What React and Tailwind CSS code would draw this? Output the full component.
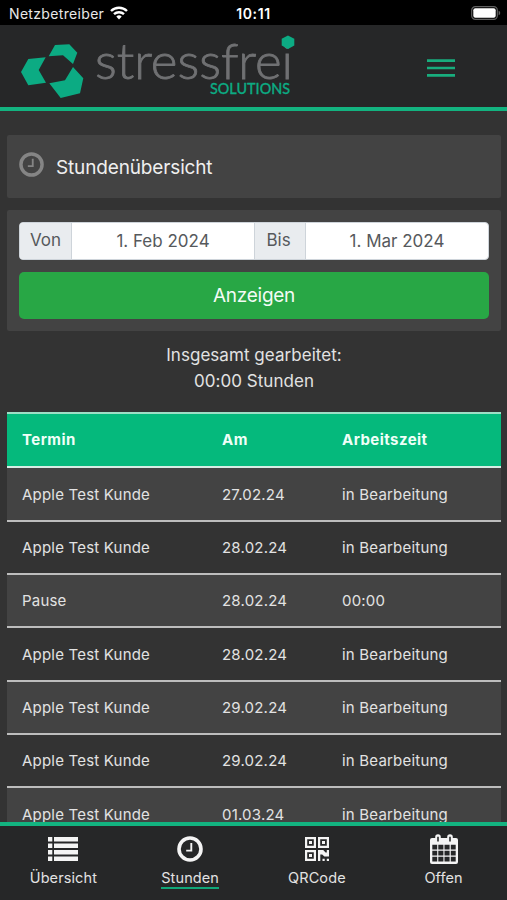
const rows = [
  { termin: "Apple Test Kunde", am: "27.02.24", zeit: "in Bearbeitung" },
  { termin: "Apple Test Kunde", am: "28.02.24", zeit: "in Bearbeitung" },
  { termin: "Pause", am: "28.02.24", zeit: "00:00" },
  { termin: "Apple Test Kunde", am: "28.02.24", zeit: "in Bearbeitung" },
  { termin: "Apple Test Kunde", am: "29.02.24", zeit: "in Bearbeitung" },
  { termin: "Apple Test Kunde", am: "29.02.24", zeit: "in Bearbeitung" },
  { termin: "Apple Test Kunde", am: "01.03.24", zeit: "in Bearbeitung" },
];

function ClockIcon({ className }) {
  return (
    <svg viewBox="0 0 26 26" fill="none" stroke="currentColor" className={className}>
      <circle cx="13" cy="13" r="11" strokeWidth="3.6" />
      <path d="M14.3 7v7.6H9.2" strokeWidth="1.9" />
    </svg>
  );
}

function ListIcon() {
  return (
    <svg viewBox="0 0 30 24" fill="currentColor" className="w-[30px] h-6">
      <path d="M0 0h4.3v4.6H0zM6 0h24v4.6H6zM0 6.5h4.3v4.6H0zM6 6.5h24v4.6H6zM0 12.9h4.3v4.6H0zM6 12.9h24v4.6H6zM0 19.4h4.3V24H0zM6 19.4h24V24H6z" />
    </svg>
  );
}

function QrIcon() {
  return (
    <svg viewBox="0 0 24 24" fill="currentColor" fillRule="evenodd" className="w-6 h-6">
      <path d="M0 0h11v11H0zM2.2 2.2v6.6h6.6V2.2zM4 4h3v3H4z" />
      <path d="M13 0h11v11H13zM15.2 2.2v6.6h6.6V2.2zM17 4h3v3h-3z" />
      <path d="M0 13h11v11H0zM2.2 15.2v6.6h6.6v-6.6zM4 17h3v3H4z" />
      <path d="M13 13h5.2l2.4 2.4h1.2V13H24v6.6h-4.6l-2.2-2.2h-1.9V24H13zM17.5 21.7h2.2V24h-2.2zM21.8 21.7H24V24h-2.2z" />
    </svg>
  );
}

function CalendarIcon() {
  return (
    <svg viewBox="0 0 28 30" fill="currentColor" fillRule="evenodd" className="w-7 h-[30px]">
      <path d="M2 4h3.2V3a2.8 2.8 0 0 1 5.6 0v1h6.4V3a2.8 2.8 0 0 1 5.6 0v1H26a2 2 0 0 1 2 2v22a2 2 0 0 1-2 2H2a2 2 0 0 1-2-2V6a2 2 0 0 1 2-2zM7.2 2.8v4.8h1.6V2.8zM19.2 2.8v4.8h1.6V2.8zM2.3 10.8v4.8h4.9v-4.8zM8.3 10.8v4.8h5.1v-4.8zM14.5 10.8v4.8h5.1v-4.8zM20.8 10.8v4.8h4.9v-4.8zM2.3 16.8v4.8h4.9v-4.8zM8.3 16.8v4.8h5.1v-4.8zM14.5 16.8v4.8h5.1v-4.8zM20.8 16.8v4.8h4.9v-4.8zM2.3 22.8v4.7h4.9v-4.7zM8.3 22.8v4.7h5.1v-4.7zM14.5 22.8v4.7h5.1v-4.7zM20.8 22.8v4.7h4.9v-4.7z" />
    </svg>
  );
}

function Logo() {
  return (
    <svg viewBox="0 0 275 66" className="w-[275px] h-[66px] overflow-visible">
      <g fill="#0cab83">
        <path d="M27.7 23.3 34 12l14.3-.7 8 8.4L52 31l-10-8.8z" />
        <path d="m0 39 7.3-13 17.4-1.7-7 12.7L25 49.7 7.3 52.3z" />
        <path d="m28.3 50.3 15.7-3L52 34l10.3 11.3-3.3 15L39.7 65z" />
      </g>
      <text x="74" y="46" textLength="198" lengthAdjust="spacingAndGlyphs" strokeWidth="0.8" className="fill-[#707173] stroke-[#707173] font-['Lato',sans-serif] font-light text-[49px]">stressfrei</text>
      <path d="m267 2.4 6.3 3.4v6.8l-6.3 3.5-6.3-3.5V5.8z" fill="#0cab83" />
      <text x="189" y="61" textLength="80" lengthAdjust="spacingAndGlyphs" strokeWidth="0.3" className="fill-[#0cab83] stroke-[#0cab83] font-['Lato',sans-serif] font-medium text-[14.5px]">SOLUTIONS</text>
    </svg>
  );
}

function StatusBar() {
  return (
    <div className="grid grid-cols-3 items-center h-[25px] shrink-0 bg-black text-white px-[9px] pt-[3px]">
      <div className="flex items-center gap-[6px]">
        <span className="text-[14px] tracking-[0.33px] leading-5 text-[#e8e8e8] -mt-px">Netzbetreiber</span>
        <svg viewBox="0 0 18 14" fill="none" stroke="currentColor" className="w-[18px] h-[14px] -mt-[3px]">
          <path d="M1 5a11.5 11.5 0 0 1 16 0M4 8.2a7.2 7.2 0 0 1 10 0" strokeWidth="2.4" />
          <path d="m9 13.4-2.7-2.9a3.9 3.9 0 0 1 5.4 0z" fill="currentColor" stroke="none" />
        </svg>
      </div>
      <span className="text-center text-[14px] leading-5 font-semibold tracking-[0.6px] -mt-px">10:11</span>
      <svg viewBox="0 0 30 14" className="w-[30px] h-[14px] justify-self-end -mr-[3px] -mt-[3px]">
        <rect x=".7" y=".7" width="25.6" height="12.6" rx="3.6" fill="none" stroke="#606060" strokeWidth="1.2" />
        <rect x="2.3" y="2.3" width="22.4" height="9.4" rx="2" fill="#fff" />
        <path d="M27.6 4.8a2.3 2.3 0 0 1 0 4.4z" fill="#606060" />
      </svg>
    </div>
  );
}

function NavItem({ icon, label, active }) {
  return (
    <div className="flex flex-col items-center w-[127px]">
      <div className="flex items-center justify-center h-[30px] text-[#f4f4f4]">{icon}</div>
      <span className={active ? "mt-1 h-[21px] text-[14.5px] leading-5 tracking-[0.1px] border-b-2 border-[#11a779]" : "mt-1 h-[21px] text-[14.5px] leading-5 tracking-[0.1px]"}>
        {label}
      </span>
    </div>
  );
}

export default function App() {
  return (
    <div className="flex flex-col w-[507px] h-[900px] overflow-hidden bg-[#333333] text-[#e2e2e2] font-['Inter',sans-serif]">
      <StatusBar />

      <header className="flex items-center justify-between shrink-0 h-[86px] bg-[#262728] border-b-4 border-[#13b380] pl-[21px] pr-[52px]">
        <Logo />
        <svg viewBox="0 0 28 19" fill="#18ad7d" className="w-7 h-[19px] mt-[4px]">
          <path d="M0 .3h28v2.6H0zM0 7.7h28v2.6H0zM0 15.1h28v2.6H0z" />
        </svg>
      </header>

      <main className="flex-1 min-h-0 overflow-hidden pl-[7px] pr-[6px] pt-[24px]">
        <div className="flex items-center h-[63px] bg-[#434343] rounded-[2px] px-3">
          <ClockIcon className="w-[25px] h-[25px] text-[#858585] -mt-[5px]" />
          <h1 className="ml-3 mt-[3px] text-[19px] tracking-[-0.15px] text-[#efefef]">Stundenübersicht</h1>
        </div>

        <div className="mt-3 h-[121px] bg-[#434343] rounded-[2px] p-3">
          <div className="flex h-[38px] rounded-[4px] overflow-hidden border border-[#ced4da] bg-white text-[#56595c] text-[17px]">
            <span className="flex items-center justify-center w-[52px] bg-[#e9ecef] border-r border-[#ced4da]">Von</span>
            <span className="flex items-center justify-center w-[182px] pt-[2px]">1. Feb 2024</span>
            <span className="flex items-center justify-center w-[52px] bg-[#e9ecef] border-x border-[#ced4da] pr-[3px]">Bis</span>
            <span className="flex items-center justify-center flex-1 pt-[2px]">1. Mar 2024</span>
          </div>
          <button className="mt-3 w-full h-[47px] pt-[2px] rounded-[5px] bg-[#28a745] text-[#f3fbf5] text-[19px] tracking-[-0.25px]">Anzeigen</button>
        </div>

        <div className="mt-[12px] text-center text-[17px] tracking-[0.05px] leading-[25.6px]">
          <p>Insgesamt gearbeitet:</p>
          <p>00:00 Stunden</p>
        </div>

        <table className="mt-[18px] w-full table-fixed border-separate border-spacing-0 text-left text-[15px] tracking-[0.2px]">
          <thead>
            <tr className="h-[56px] bg-[#05b97c] text-[#f0fff8] tracking-[0.45px]">
              <th className="w-[200px] pl-[15px] font-bold border-t-2 border-b-2 border-t-[#9edfc6] border-b-[#d6ece4]">Termin</th>
              <th className="w-[120px] pl-[15px] font-bold border-t-2 border-b-2 border-t-[#9edfc6] border-b-[#d6ece4]">Am</th>
              <th className="pl-[15px] font-bold border-t-2 border-b-2 border-t-[#9edfc6] border-b-[#d6ece4]">Arbeitszeit</th>
            </tr>
          </thead>
          <tbody>
            {rows.map((row, i) => (
              <tr key={i} className="h-[53.33px] odd:bg-[#434343]">
                <td className="pl-[15px] pt-[2px] border-b-2 border-[#bdbdbd]">{row.termin}</td>
                <td className="pl-[15px] pt-[2px] border-b-2 border-[#bdbdbd]">{row.am}</td>
                <td className="pl-[15px] pt-[2px] border-b-2 border-[#bdbdbd]">{row.zeit}</td>
              </tr>
            ))}
          </tbody>
        </table>
      </main>

      <nav className="flex shrink-0 h-[78px] bg-[#262728] border-t-4 border-[#13b380] pt-[8px]">
        <NavItem icon={<ListIcon />} label="Übersicht" />
        <NavItem icon={<ClockIcon className="w-[26px] h-[26px]" />} label="Stunden" active />
        <NavItem icon={<QrIcon />} label="QRCode" />
        <NavItem icon={<CalendarIcon />} label="Offen" />
      </nav>
    </div>
  );
}
